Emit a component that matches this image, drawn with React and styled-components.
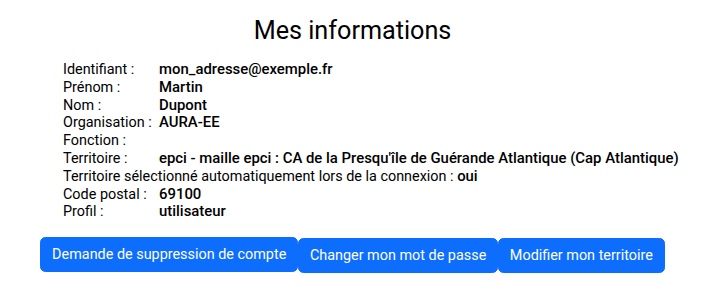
import React from "react";
import styled, { createGlobalStyle } from "styled-components";

const GlobalStyle = createGlobalStyle`
  body {
    margin: 0;
    background: #fff;
    font-family: Roboto, "Liberation Sans", sans-serif;
    color: #000;
  }
`;

const Page = styled.div`
  width: 705px;
  padding-top: 14px;
`;

const Title = styled.h2`
  margin: 0 0 13px;
  text-align: center;
  font-size: 25.2px;
  font-weight: 400;
  line-height: 34px;
`;

const InfoTable = styled.div`
  display: grid;
  grid-template-columns: 96px auto;
  margin-left: 63px;
  font-size: 14.4px;
  line-height: 17.8px;
`;

const Label = styled.div`
  grid-column: ${(props) => (props.wide ? "1 / span 2" : "1")};
`;

const Value = styled.span`
  font-size: 14.9px;
  font-weight: 500;
`;

const Actions = styled.div`
  display: flex;
  justify-content: center;
  align-items: flex-start;
  margin-top: 16px;
`;

const Button = styled.button`
  background: #0d6efd;
  color: #fff;
  border: 0.9px solid #0d6efd;
  border-radius: 5.4px;
  font-family: Roboto, "Liberation Sans", sans-serif;
  font-size: 14.4px;
  line-height: 21.6px;
  padding: 5.4px 10.8px;
  margin-top: ${(props) => (props.shift ? "1px" : "0")};
  cursor: pointer;
`;

const rows = [
  ["Identifiant :", "mon_adresse@exemple.fr"],
  ["Prénom :", "Martin"],
  ["Nom :", "Dupont"],
  ["Organisation :", "AURA-EE"],
  ["Fonction :", ""],
  [
    "Territoire :",
    "epci - maille epci : CA de la Presqu'île de Guérande Atlantique (Cap Atlantique)",
  ],
];

const rowsAfter = [
  ["Code postal :", "69100"],
  ["Profil :", "utilisateur"],
];

function App() {
  return (
    <Page>
      <GlobalStyle />
      <Title>Mes informations</Title>
      <InfoTable>
        {rows.map(([label, value]) => (
          <React.Fragment key={label}>
            <Label>{label}</Label>
            <Value>{value}</Value>
          </React.Fragment>
        ))}
        <Label wide>
          Territoire sélectionné automatiquement lors de la connexion :{" "}
          <Value>oui</Value>
        </Label>
        {rowsAfter.map(([label, value]) => (
          <React.Fragment key={label}>
            <Label>{label}</Label>
            <Value>{value}</Value>
          </React.Fragment>
        ))}
      </InfoTable>
      <Actions>
        <Button>Demande de suppression de compte</Button>
        <Button shift>Changer mon mot de passe</Button>
        <Button shift>Modifier mon territoire</Button>
      </Actions>
    </Page>
  );
}

export default App;
